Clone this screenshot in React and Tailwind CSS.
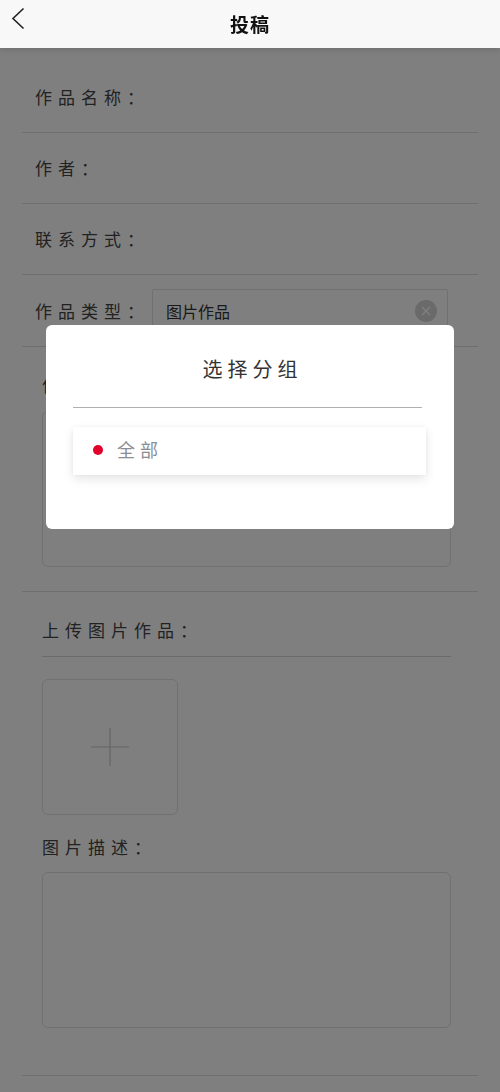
import { useState } from 'react';

const font = { fontFamily: '"Noto Sans CJK SC", "Noto Sans", sans-serif' };

const rows = ['作品名称：', '作者：', '联系方式：'];

const Label = ({ children, className = '' }) => (
  <span className={`text-[17px] tracking-[6px] text-[#444] leading-6 whitespace-nowrap ${className}`}>
    {children}
  </span>
);

const App = () => {
  const [group, setGroup] = useState('全部');

  return (
    <div style={font} className="min-h-[1092px] bg-white">
      <div className="relative z-20 h-12 bg-[#f8f8f8] shadow-[0_2px_6px_rgba(0,0,0,0.12)] flex items-center justify-center">
        <button className="absolute left-[10px] top-[7px] p-0">
          <svg width="18" height="24" viewBox="0 0 18 24">
            <polyline points="13.5,1.5 3,11.5 13.5,21.5" fill="none" stroke="#222" strokeWidth="1.6" />
          </svg>
        </button>
        <h1 className="text-[19px] font-bold text-[#111] tracking-[1px]">投稿</h1>
      </div>

      <div className="pt-[14px] pb-10">
        {rows.map((r) => (
          <div key={r} className="mx-[22px] h-[71px] border-b border-[#dcdcdc] flex items-center pl-[13px]">
            <Label>{r}</Label>
          </div>
        ))}

        <div className="mx-[22px] h-[72px] border-b border-[#dcdcdc] flex items-center pl-[13px] pr-[30px]">
          <Label className="w-[117px]">作品类型：</Label>
          <div className="flex-1 h-[44px] border border-[#e3e3e3] rounded-[2px] flex items-center pl-[13px] pr-[10px]">
            <span className="flex-1 text-[16px] text-[#333]">图片作品</span>
            <span className="w-[22px] h-[22px] rounded-full bg-[#d4d4d4] flex items-center justify-center">
              <svg width="10" height="10" viewBox="0 0 10 10">
                <path d="M1 1 L9 9 M9 1 L1 9" stroke="#fff" strokeWidth="1.4" />
              </svg>
            </span>
          </div>
        </div>

        <div className="mx-[22px] border-b border-[#dcdcdc] pl-5 pr-[27px] pt-[26px] pb-[24px]">
          <Label>作品简介：</Label>
          <div className="mt-[14px] h-[156px] border border-[#e0e0e0] rounded-[6px]" />
        </div>

        <div className="mx-[22px] border-b border-[#dcdcdc] pl-5 pr-[27px] pt-[26px] pb-[47px]">
          <div className="pb-[14px] border-b border-[#d6d6d6]">
            <Label>上传图片作品：</Label>
          </div>
          <div className="mt-[22px] w-[136px] h-[136px] border border-[#e3e3e3] rounded-[6px] flex items-center justify-center">
            <svg width="38" height="38" viewBox="0 0 38 38">
              <path d="M19 0 V38 M0 19 H38" stroke="#c8c8c8" strokeWidth="1.2" />
            </svg>
          </div>
          <div className="mt-[20px]">
            <Label>图片描述：</Label>
          </div>
          <div className="mt-[13px] h-[156px] border border-[#e0e0e0] rounded-[6px]" />
        </div>
      </div>

      <div className="fixed inset-0 z-10 bg-black/50" />

      <div className="fixed inset-0 z-30 flex justify-center pt-[325px] pointer-events-none">
        <div className="w-[408px] h-[204px] bg-white rounded-[6px] pointer-events-auto flex flex-col">
          <h2 className="mt-[32px] text-center text-[20px] leading-6 tracking-[5px] pl-[5px] text-[#333]">
            选择分组
          </h2>
          <div className="mt-[26px] ml-[27px] mr-[32px] border-b border-[#b0b0b0]" />
          <button
            onClick={() => setGroup('全部')}
            className="mt-[19px] ml-[27px] mr-[28px] h-[48px] bg-white shadow-[0_4px_10px_rgba(0,0,0,0.1),0_0_4px_rgba(0,0,0,0.04)] flex items-center pl-[20px] pb-[4px]"
          >
            <span className={`w-[10px] h-[10px] rounded-full mt-[2px] ${group === '全部' ? 'bg-[#e2002b]' : 'bg-transparent'}`} />
            <span className="ml-[14px] text-[18px] leading-6 tracking-[5px] text-[#8a8d93]">全部</span>
          </button>
        </div>
      </div>
    </div>
  );
};

export default App;
